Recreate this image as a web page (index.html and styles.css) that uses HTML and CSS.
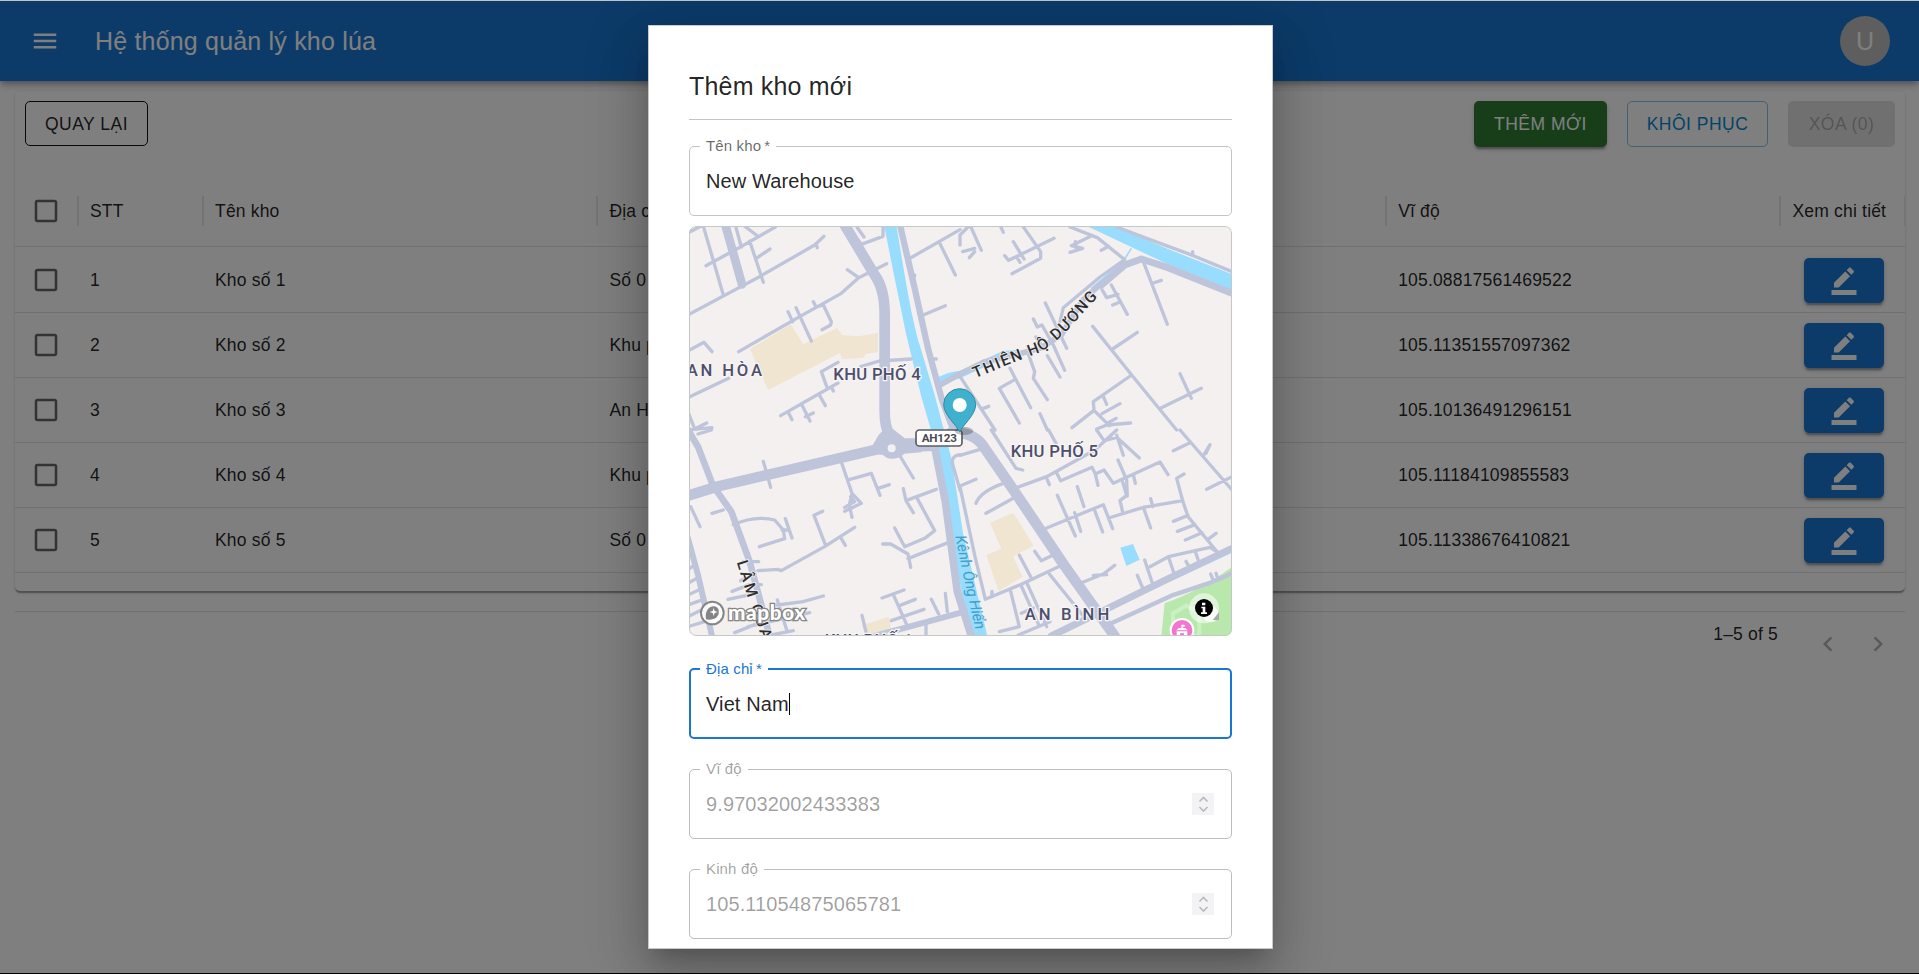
FILE: index.html
```html
<!DOCTYPE html>
<html lang="vi">
<head>
<meta charset="utf-8">
<title>Hệ thống quản lý kho lúa</title>
<link rel="stylesheet" href="styles.css">
</head>
<body>
<svg width="0" height="0" class="defs">
  <defs>
    <symbol id="box" viewBox="0 0 24 24"><path d="M19 5v14H5V5h14m0-2H5c-1.1 0-2 .9-2 2v14c0 1.1.9 2 2 2h14c1.1 0 2-.9 2-2V5c0-1.1-.9-2-2-2z"/></symbol>
    <symbol id="edit" viewBox="0 0 24 24"><path d="M22 24H2v-4h20v4zM13.06 5.19l3.75 3.75L7.75 18H4v-3.75l9.06-9.06zm4.82 2.68-3.75-3.75 1.83-1.83c.39-.39 1.02-.39 1.41 0l2.34 2.34c.39.39.39 1.02 0 1.41l-1.83 1.83z"/></symbol>
  </defs>
</svg>
<div class="page">
  <header class="appbar">
    <svg class="icon menu" viewBox="0 0 24 24"><path d="M3 18h18v-2H3v2zm0-5h18v-2H3v2zm0-7v2h18V6H3z"/></svg>
    <h1 class="brand">Hệ thống quản lý kho lúa</h1>
    <div class="avatar">U</div>
  </header>
  <main class="card">
    <div class="toolbar">
      <button class="btn btn-back">QUAY LẠI</button>
      <div class="actions">
        <button class="btn btn-add">THÊM MỚI</button>
        <button class="btn btn-restore">KHÔI PHỤC</button>
        <button class="btn btn-delete">XÓA (0)</button>
      </div>
    </div>
    <div class="row head">
      <div class="check"><svg class="icon"><use href="#box"/></svg></div>
      <div class="cell">STT</div><div class="cell">Tên kho</div><div class="cell">Địa chỉ</div><div class="cell"></div><div class="cell">Vĩ độ</div><div class="cell last">Xem chi tiết</div>
    </div>
    <div class="row">
      <div class="check"><svg class="icon"><use href="#box"/></svg></div>
      <div class="cell">1</div><div class="cell">Kho số 1</div><div class="cell">Số 0</div><div class="cell"></div><div class="cell">105.08817561469522</div>
      <div class="edit-cell"><button class="edit"><svg class="icon"><use href="#edit"/></svg></button></div>
    </div>
    <div class="row">
      <div class="check"><svg class="icon"><use href="#box"/></svg></div>
      <div class="cell">2</div><div class="cell">Kho số 2</div><div class="cell">Khu phố</div><div class="cell"></div><div class="cell">105.11351557097362</div>
      <div class="edit-cell"><button class="edit"><svg class="icon"><use href="#edit"/></svg></button></div>
    </div>
    <div class="row">
      <div class="check"><svg class="icon"><use href="#box"/></svg></div>
      <div class="cell">3</div><div class="cell">Kho số 3</div><div class="cell">An Hòa</div><div class="cell"></div><div class="cell">105.10136491296151</div>
      <div class="edit-cell"><button class="edit"><svg class="icon"><use href="#edit"/></svg></button></div>
    </div>
    <div class="row">
      <div class="check"><svg class="icon"><use href="#box"/></svg></div>
      <div class="cell">4</div><div class="cell">Kho số 4</div><div class="cell">Khu phố</div><div class="cell"></div><div class="cell">105.11184109855583</div>
      <div class="edit-cell"><button class="edit"><svg class="icon"><use href="#edit"/></svg></button></div>
    </div>
    <div class="row">
      <div class="check"><svg class="icon"><use href="#box"/></svg></div>
      <div class="cell">5</div><div class="cell">Kho số 5</div><div class="cell">Số 0</div><div class="cell"></div><div class="cell">105.11338676410821</div>
      <div class="edit-cell"><button class="edit"><svg class="icon"><use href="#edit"/></svg></button></div>
    </div>
  </main>
  <footer class="pager">
    <span class="range">1–5 of 5</span>
    <svg class="icon prev" viewBox="0 0 24 24"><path d="M15.41 7.41L14 6l-6 6 6 6 1.41-1.41L10.83 12z"/></svg>
    <svg class="icon next" viewBox="0 0 24 24"><path d="M10 6L8.59 7.41 13.17 12l-4.58 4.59L10 18l6-6z"/></svg>
  </footer>
</div>

<div class="backdrop">
  <section class="modal">
    <h2 class="modal-title">Thêm kho mới</h2>
    <div class="field"><label class="label">Tên kho&thinsp;*</label><span class="value">New Warehouse</span></div>
    <div class="map">
      <svg class="map-canvas" viewBox="3 3 1629 1230">
        <rect width="1632" height="1233" fill="#f3f0ef"/>
        <g fill="#efe5d1">
          <path d="M186 372L308 298L346 358L447 309L462 330L512 334L570 323V382L534 386L526 398L462 403L456 384L240 495Z"/>
          <path d="M906 893L976 863L1037 963L975 994L1004 1055L932 1098L895 991L940 971Z"/>
          <path d="M533 1198L603 1175L612 1233H540Z"/>
        </g>
        <path fill="#b9e8ad" d="M1420 1233L1430 1135C1500 1110 1570 1072 1632 1026V1233Z"/>
        <g fill="#98dcfe">
          <path d="M588 0H625C645 120 670 280 695 360L740 510L790 700L826 930L898 1233H846L782 900L742 660L700 515L655 330L620 160Z"/>
          <path d="M1190 0H1272L1440 72L1632 148V196L1440 118Z"/>
          <path d="M740 462Q780 440 816 437L945 378L990 374L950 398L816 460L745 480Z"/>
          <path d="M1297 968L1335 957L1355 1004L1315 1023Z"/>
        </g>
        <path d="M1330 70L1305 110L1210 190" fill="none" stroke="#98dcfe" stroke-width="5"/>
        <path d="M1180 1186L1400 1086L1632 978" fill="none" stroke="#98dcfe" stroke-width="10"/>
        <!-- main roads -->
        <g class="road" stroke-width="32">
          <path d="M470 0L560 150Q590 190 590 270V560Q590 650 650 662"/>
          <path d="M0 812L90 784L400 712L590 668L740 662" />
          <path d="M790 622Q860 622 886 664L980 800L1128 1020L1280 1233"/>
        </g>
        <path fill="#bec5da" d="M572 630L600 600L650 640L700 640V682L650 686Q612 715 585 690L540 684Z"/>
        <circle cx="611" cy="670" r="12" fill="#f3f0ef"/>
        <g class="road" stroke-width="26">
          <path d="M112 0L162 178"/>
          <path d="M740 665L772 830L808 1100L850 1233" stroke-width="23"/>
          <path d="M636 0L680 190L720 370L762 525L800 625" stroke-width="19"/>
          <path d="M1632 205L1440 128L1360 102L1310 120L1240 180" stroke-width="21"/>
          <path d="M1240 175L1185 225L1120 330L1060 368L1000 385L890 410L810 450L752 482" stroke-width="17"/>
          <path d="M1090 1233L1240 1160L1430 1066L1632 970" stroke-width="21"/>
          <path d="M0 615L30 665L75 782L130 860L185 1010L245 1233" stroke-width="20"/>
          <path d="M0 940L30 1050L72 1233" stroke-width="18"/>
          <path d="M1270 1195L1450 1112L1570 1072L1632 1045" stroke-width="13"/>
          <path d="M560 1233L700 1195L830 1160" stroke-width="18"/>
        </g>
        <!-- streets, north-west -->
        <g class="road" stroke-width="10">
          <path d="M0 270L220 152L380 60L408 34M384 56L388 68M0 24L45 0M45 0L106 210M54 122L150 70L262 6M142 0L160 66M185 48L226 172M205 100L246 72M165 0L205 30"/>
          <path d="M152 380L335 275L460 205L512 158L596 116M478 134L512 158M300 260L314 290M324 248L370 348M376 230L384 246L406 240L430 290L428 300L402 314M0 378L48 352L72 380M0 518L122 460"/>
          <path d="M278 572L450 474M450 412L400 440L416 484M340 536L366 588M394 510L412 542M430 486L436 498M300 560L312 584M352 575L376 564M0 615L72 608M0 560L20 612L56 594"/>
          <path d="M490 20L520 58L585 34V0M508 8L528 36M662 102L816 14M756 56L802 150M706 270L772 242M736 402H745M518 425L574 408L670 402"/>
          <path d="M680 150L674 175"/>
        </g>
        <!-- streets, north-east -->
        <g class="road" stroke-width="10" transform="translate(816 0)">
          <path d="M0 60L0 30L30 0L64 76M8 80L44 70M28 98L44 80M120 0L130 22M186 0L242 80V100L156 146M134 92L146 106L282 40M160 50L192 102M170 96L180 112M330 6L412 38L494 104L420 156L310 248L300 290M392 34L334 62L368 70L330 82M346 50L350 76M424 76L446 64"/>
          <path d="M470 6L560 40L700 92L816 140M698 80V92M550 110L622 298M580 174L604 166M454 180L502 268M426 194L440 218L474 208M458 240L482 230M398 304L515 450L650 615M458 372L532 322M515 450L400 530L402 556L448 602M402 556L336 608M430 514L440 538M426 566L480 536M440 596L468 580M604 548L724 490M660 446L694 520"/>
          <path d="M256 234L320 370M220 282L232 306L246 300L280 360L314 436M262 392L300 456M228 336L244 360M206 390L224 440L220 460L262 524M150 430L212 548M164 464L118 490L178 594M0 454L105 615M70 550L86 544M240 566L262 615M410 612L440 600L512 594"/>
        </g>
        <!-- streets, south-west -->
        <g class="road" stroke-width="10" transform="translate(0 615)">
          <path d="M30 12L70 0M226 94L248 172M72 250L106 240M8 230L36 290M136 284Q200 255 260 270L286 300L290 326L214 350M292 266L312 324M282 300H300M404 244L378 256L412 344M210 422L270 418L280 422L410 350L500 292M460 326L472 346M460 96L492 190L520 220L470 244M486 148L550 130L576 196M568 176L604 164M492 190L484 225L492 262M470 232L500 215L488 200M636 78L676 144"/>
          <path d="M646 176L654 212L676 248M654 212L745 178M688 206L740 302L710 325L650 350L620 294M584 342H608L660 372L668 412M660 386L780 338M582 504L648 480M616 494L656 584M636 526L682 508M610 572L708 538M730 508L752 552M772 490L778 545M522 556L534 606M714 580V615M200 430L158 452M165 395H212M132 484L185 464H220M120 508L205 490M268 510L298 606M268 525L345 515L406 498M180 590L365 548M140 608L210 580M250 615L316 602"/>
          <path d="M0 420L18 405M0 460L26 445M0 495L32 480M0 525L36 512M0 560L40 540M0 590L50 575"/>
          <path d="M816 74Q785 78 796 110L816 180"/>
        </g>
        <!-- streets, south-east -->
        <g class="road" stroke-width="10" transform="translate(816 615)">
          <path d="M0 76L60 58M94 0L168 115L188 120M0 168L48 148M0 170L45 380L76 508L186 462L300 408M48 220Q60 185 130 160M78 250L165 202M172 172L260 140L405 60L470 0M266 0L288 40M258 140L268 164M288 125L302 152L396 112L406 132L432 120L460 160L600 96L624 134M406 132L414 166M474 90L500 150L502 198M486 150L500 196L480 212L488 246M520 134L526 160M260 294L430 224L458 296M292 196L346 318M352 170L372 230M344 248L362 304M402 236L428 306M446 264L550 232L668 212L650 145L672 132M572 206L578 230M550 232L572 294"/>
          <path d="M410 0L432 32L470 22L538 84M470 16L490 76M660 0L816 180M640 62L690 38M732 74L750 44L738 70M816 140L740 178M668 212L684 260L772 366M640 274L684 256M652 304L705 284M676 330L726 308M744 328L768 310M570 410L625 380L750 352L772 366M625 380L642 430M554 390L576 456M532 436L548 474M705 362L714 388M678 394L688 412M752 432L760 452M768 430L774 448"/>
          <path d="M370 456L430 432L464 406M400 436L440 434M224 364L244 392L278 376M178 376L216 448M268 432L370 558M96 484V500M152 484L178 590L118 605M184 468L236 584M202 462L260 590M184 550L220 534M175 615L270 575"/>
        </g>
        <g class="district">
          <text x="-4" y="452" textLength="226">AN HÒA</text>
          <text x="436" y="465" textLength="262">KHU PHỐ 4</text>
          <text x="968" y="696" textLength="262">KHU PHỐ 5</text>
          <text x="1010" y="1186" textLength="254">AN BÌNH</text>
          <text x="410" y="1262" textLength="264">KHU PHỐ 1</text>
        </g>
        <path id="thd" d="M862 460L955 421L1062 380C1150 318 1175 268 1230 216" fill="none"/>
        <path id="lam" d="M146 1012L190 1150L260 1350" fill="none"/>
        <path id="canal" d="M802 934Q826 1060 866 1228" fill="none"/>
        <g class="street"><text><textPath href="#thd" textLength="450">THIÊN HỘ DƯƠNG</textPath></text>
        <text><textPath href="#lam" textLength="325">LÂM QUANG</textPath></text></g>
        <text class="water"><textPath href="#canal" textLength="288">Kênh Ông Hiển</textPath></text>
        <rect x="684" y="615" width="138" height="48" rx="10" fill="#fff" stroke="#5b5b66" stroke-width="5"/>
        <text x="701" y="650" textLength="106" class="shield">AH123</text>
        <ellipse cx="828" cy="618" rx="28" ry="12" fill="#333" opacity=".3"/>
        <path d="M815 620C805 600 767 569 767 539A48 48 0 0 1 863 539C863 569 825 600 815 620Z" fill="#3fb1ce" stroke="#318ba3" stroke-width="3"/>
        <circle cx="815" cy="540" r="21" fill="#fff"/>
        <!-- attribution -->
        <circle cx="73" cy="1164" r="34" fill="#fff" fill-opacity=".85" stroke="#858585" stroke-width="6"/>
        <path d="M54 1183C47 1140 88 1134 92 1156C96 1180 72 1187 54 1183Z" fill="#858585"/>
        <path d="M77 1149L80 1158L89 1161L80 1164L77 1173L74 1164L65 1161L74 1158Z" fill="#fff"/>
        <text x="120" y="1184" textLength="232" class="logo">mapbox</text>
        <path d="M1455 1165L1495 1142L1534 1165V1233H1455Z" fill="none" stroke="#cbf0c1" stroke-width="12"/>
        <circle cx="1482" cy="1216" r="34" fill="#f375cd" stroke="#fff" stroke-width="6"/>
        <path d="M1480 1199H1490V1205H1484V1209H1492L1499 1216H1465L1472 1209H1480ZM1466 1219H1498V1232H1488V1225H1476V1232H1466Z" fill="#fff"/>
        <circle cx="1548" cy="1150" r="45" fill="#fff" fill-opacity=".55"/>
        <circle cx="1568" cy="1168" r="24" fill="#fff" fill-opacity=".8"/>
        <path d="M1574 1185L1593 1162V1185Z" fill="#aaa"/>
        <circle cx="1548" cy="1149" r="27" fill="#000"/>
        <path d="M1542 1133H1552V1141H1542ZM1540 1145H1552V1162H1557V1167H1539V1162H1544V1150H1540Z" fill="#fff"/>
      </svg>
    </div>
    <div class="field focused"><label class="label">Địa chỉ&thinsp;*</label><span class="value">Viet Nam</span><i class="caret"></i></div>
    <div class="field disabled"><label class="label">Vĩ độ</label><span class="value">9.97032002433383</span>
      <svg class="spin" viewBox="0 0 22 22"><path d="M7.5 8.5L11.5 4.5L15.5 8.5M7.5 14L11.5 18L15.5 14"/></svg></div>
    <div class="field disabled"><label class="label">Kinh độ</label><span class="value">105.11054875065781</span>
      <svg class="spin" viewBox="0 0 22 22"><path d="M7.5 8.5L11.5 4.5L15.5 8.5M7.5 14L11.5 18L15.5 14"/></svg></div>
  </section>
</div>
</body>
</html>
```
FILE: styles.css
```css
* { box-sizing: border-box; }
body {
  margin: 0;
  width: 1919px;
  height: 974px;
  overflow: hidden;
  background: #fff;
  color: rgba(0, 0, 0, .87);
  font-family: "Liberation Sans", Arial, sans-serif;
}
.defs { position: absolute; }
.icon { width: 30px; height: 30px; fill: currentColor; display: block; flex: none; }

.page { height: 974px; padding-top: 1px; }
.appbar {
  position: relative;
  height: 80px;
  padding: 0 29px 0 30px;
  display: flex;
  align-items: center;
  background: #1976d2;
  color: #fff;
  box-shadow: 0 2.5px 5px -1px rgba(0,0,0,.2), 0 5px 6.25px rgba(0,0,0,.14), 0 1.25px 12.5px rgba(0,0,0,.12);
}
.brand { margin: 0 auto 0 35px; font-size: 25px; font-weight: 400; letter-spacing: .0075em; }
.avatar {
  width: 50px; height: 50px; border-radius: 50%;
  display: flex; align-items: center; justify-content: center;
  background: #bdbdbd; font-size: 25px;
}

.card {
  margin: 10px 14px 0 15px;
  height: 500px;
  border-radius: 5px;
  background: #fff;
  box-shadow: 0 2.5px 1.25px -1px rgba(0,0,0,.2), 0 1.25px 1.25px rgba(0,0,0,.14), 0 1.25px 3.75px rgba(0,0,0,.12);
}
.toolbar { height: 85px; padding: 10px 10px 0; display: flex; justify-content: space-between; align-items: flex-start; }
.actions { display: flex; gap: 20px; }
.btn {
  height: 46px;
  padding: 0;
  border: 1px solid transparent;
  border-radius: 5px;
  background: none;
  font: 17.5px "Liberation Sans", Arial, sans-serif;
  letter-spacing: .02857em;
  white-space: nowrap;
}
.btn-back { width: 123px; height: 45px; padding-top: 1px; color: rgba(0,0,0,.87); border-color: #111; }
.btn-add {
  width: 133px; background: #2e7d32; color: #fff;
  box-shadow: 0 3.75px 1.25px -2.5px rgba(0,0,0,.2), 0 2.5px 2.5px rgba(0,0,0,.14), 0 1.25px 6.25px rgba(0,0,0,.12);
}
.btn-restore { width: 141px; color: #0288d1; border-color: rgba(2,136,209,.5); }
.btn-delete { width: 107px; background: rgba(0,0,0,.12); color: rgba(0,0,0,.26); }

.row {
  height: 65px;
  display: grid;
  grid-template-columns: 62.5px 125px repeat(4, 1fr) 125px;
  align-items: center;
  border-bottom: 1px solid #e0e0e0;
  font-size: 17.5px;
  letter-spacing: .01071em;
}
.row.head { height: 71px; }
.row.head + .row { height: 66px; padding-top: 1px; }
.check { padding-left: 16px; color: rgba(0,0,0,.6); }
.cell { padding-left: 12.5px; white-space: nowrap; overflow: hidden; }
.head .cell { height: 30px; line-height: 30px; margin-left: -1px; border-left: 2px solid #e6e6e6; padding-left: 11.5px; }
.head .last { border-right: 1px solid #e6e6e6; }
.edit-cell { padding-left: 23.5px; }
.edit {
  width: 80px; height: 45px; padding: 0; border: 0; border-radius: 5px;
  display: flex; align-items: center; justify-content: center;
  background: #1976d2; color: #fff;
  box-shadow: 0 3.75px 1.25px -2.5px rgba(0,0,0,.2), 0 2.5px 2.5px rgba(0,0,0,.14), 0 1.25px 6.25px rgba(0,0,0,.12);
}
.pager {
  margin: 20px 14px 0 15px;
  padding: 17px 12px 0 0;
  display: flex;
  justify-content: flex-end;
  align-items: flex-start;
  border-top: 1px solid #e0e0e0;
  font-size: 17.5px;
  letter-spacing: .01071em;
  line-height: 10px;
}
.range { margin-right: 35px; }
.pager .icon { color: rgba(0,0,0,.3); }
.next { margin-left: 20px; }

.backdrop {
  position: absolute;
  inset: 0;
  height: 974px;
  padding: 24px 0 0 2px;
  display: flex;
  justify-content: center;
  align-items: flex-start;
  background: rgba(0,0,0,.5);
  border-top: 1px solid #c4c4c4;
  border-bottom: 1px solid #000;
}
.modal {
  width: 625px;
  height: 924px;
  padding: 40px;
  border: 1px solid #c8c8ce;
  background: #fff;
  overflow: hidden;
  box-shadow: 0 14px 19px -9px rgba(0,0,0,.2), 0 30px 47px 4px rgba(0,0,0,.14), 0 11px 57px 10px rgba(0,0,0,.12);
}
.modal-title {
  margin: 0 0 26px;
  height: 54px;
  line-height: 41px;
  border-bottom: 1px solid #c4c4c4;
  font-size: 25px;
  font-weight: 400;
  letter-spacing: .0075em;
}
.field {
  position: relative;
  height: 70px;
  margin-bottom: 30px;
  padding: 0 17px 0 16px;
  display: flex;
  align-items: center;
  border: 1px solid #c4c4c4;
  border-radius: 5px;
  font-size: 20px;
}
.label {
  position: absolute;
  left: 10px;
  top: -10px;
  padding: 0 6px;
  background: #fff;
  color: rgba(0,0,0,.6);
  font-size: 15px;
  line-height: 18px;
  letter-spacing: .00938em;
}
.value { letter-spacing: .11px; }
.focused { height: 71px; padding: 1px 15px 0; border: 2px solid #1976d2; }
.focused .label { left: 9px; top: -10px; color: #1976d2; }
.caret { width: 1px; height: 22px; background: #000; }
.disabled { border-color: #bdbdbd; color: rgba(0,0,0,.38); }
.disabled .label { color: rgba(0,0,0,.38); }
.spin { width: 22px; height: 22px; margin-left: auto; background: #f3f3f5; }
.spin path { fill: none; stroke: #b9b9be; stroke-width: 1.6; }

.map {
  height: 410px;
  margin: -20px 0 32px;
  border-radius: 7px;
  overflow: hidden;
  position: relative;
}
.map::after {
  content: "";
  position: absolute;
  inset: 0;
  border: 1px solid #c4c8c6;
  border-radius: 7px;
}
.map-canvas { display: block; width: 543px; height: 410px; }
.road { fill: none; stroke: #bec5da; stroke-linecap: round; stroke-linejoin: round; }
.map-canvas text { font-family: Roboto, sans-serif; }
.district text { font-size: 50px; font-weight: 500; fill: #4c4f6b; stroke: #f7f5f5; stroke-width: 7px; paint-order: stroke; }
.street text { font-size: 47px; font-weight: 500; fill: #2e2e30; stroke: #f3f0ef; stroke-width: 5px; paint-order: stroke; }
.map-canvas .water { font-size: 46px; font-style: italic; fill: #3f9fcb; }
.map-canvas .shield { font-size: 35px; font-weight: 700; fill: #4a4a52; }
.map-canvas .logo { font-family: Lato, sans-serif; font-size: 62px; font-weight: 900; fill: #fff; stroke: #858585; stroke-width: 8px; paint-order: stroke; }
```
